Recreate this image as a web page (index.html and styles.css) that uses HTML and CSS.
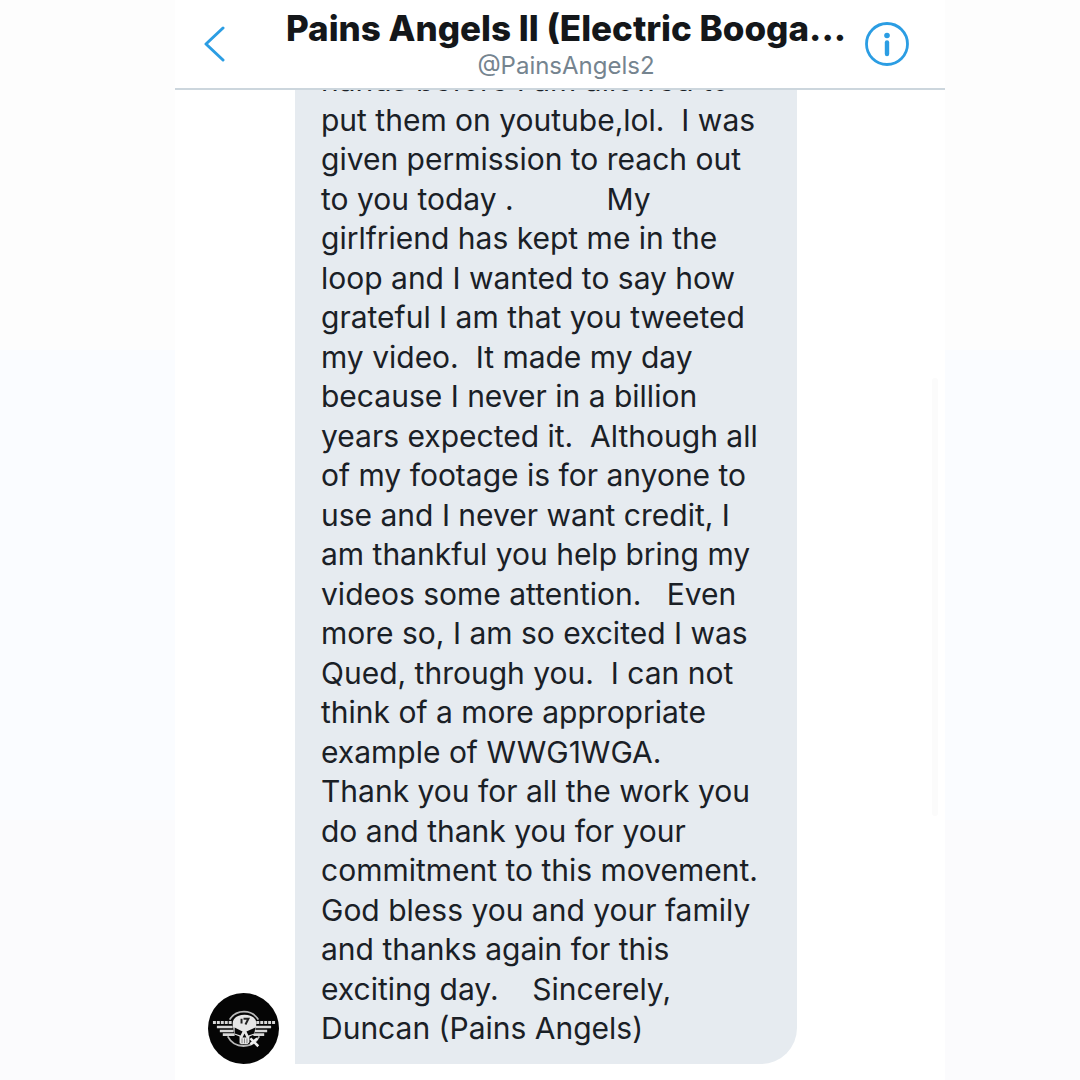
FILE: index.html
```html
<!DOCTYPE html>
<html lang="en">
<head>
<meta charset="utf-8">
<meta name="viewport" content="width=device-width, initial-scale=1">
<title>Pains Angels II - Messages</title>
<link rel="stylesheet" href="styles.css">
</head>
<body>
<div class="phone">
  <header class="bar">
    <button class="icon-button" type="button" aria-label="Back">
      <svg width="22" height="36" viewBox="0 0 22 36" fill="none" stroke="#2b9de3" stroke-width="3" stroke-linecap="round" stroke-linejoin="round"><path d="M19 2L2 18l17 16"/></svg>
    </button>
    <div class="heading">
      <h1 class="name">Pains Angels II (Electric Booga...</h1>
      <p class="handle">@PainsAngels2</p>
    </div>
    <button class="icon-button" type="button" aria-label="Conversation info">
      <svg width="44" height="44" viewBox="0 0 44 44" fill="none" stroke="#2b9de3"><circle cx="22" cy="22" r="20.5" stroke-width="2.8"/><circle cx="22" cy="13.5" r="2.8" fill="#2b9de3" stroke="none"/><path d="M22 20.5v11.5" stroke-width="4.4" stroke-linecap="round"/></svg>
    </button>
  </header>
  <main class="thread">
    <article class="message">
      <svg class="avatar" viewBox="0 0 72 72" role="img" aria-label="Pains Angels">
        <circle cx="36" cy="36" r="36" fill="#050505"/>
        <path d="M22 27a17 17 0 0 1 29 0M20 44a18 18 0 0 0 32 0" fill="none" stroke="#b9b9b9" stroke-width="1.8"/>
        <g stroke="#d8d8d8" fill="none">
          <path d="M5 30h19M49 30h19" stroke-width="3" stroke-dasharray="3 1"/>
          <path d="M9 34.500h16M48 34.500h16M12 38.500h14M47 38.500h13M15 42.200h12M46 42.200h11" stroke-width="2.6"/>
        </g>
        <path d="M37 22c-8 0-12 4-12 9 0 3 1 5 1 7l1 4 5 2v7l2 1h6l2-2v-6l5-2 1-4c0-2 1-4 1-7 0-5-4-9-12-9z" fill="#e6e6e6"/>
        <path d="M27 35l8 4-2 4-6-2zM48 35l-9 4 2 4 6-2zM37 41l2 4h-4z" fill="#080808"/>
        <path d="M34.500 46v5M37 46v5M39.500 46v5" stroke="#555" stroke-width=".7"/>
        <path d="M34 26v5M36 26h5l-3 6" fill="none" stroke="#222" stroke-width="2"/>
        <path d="M43 46l8 8M50 46l-7 6" stroke="#eee" stroke-width="2.600"/>
      </svg>
      <p class="bubble">
        <span class="line">hands before I am allowed to</span>
        <span class="line">put them on youtube,lol.  I was</span>
        <span class="line">given permission to reach out</span>
        <span class="line">to you today .           My</span>
        <span class="line">girlfriend has kept me in the</span>
        <span class="line">loop and I wanted to say how</span>
        <span class="line">grateful I am that you tweeted</span>
        <span class="line">my video.  It made my day</span>
        <span class="line">because I never in a billion</span>
        <span class="line">years expected it.  Although all</span>
        <span class="line">of my footage is for anyone to</span>
        <span class="line">use and I never want credit, I</span>
        <span class="line">am thankful you help bring my</span>
        <span class="line">videos some attention.   Even</span>
        <span class="line">more so, I am so excited I was</span>
        <span class="line">Qued, through you.  I can not</span>
        <span class="line">think of a more appropriate</span>
        <span class="line">example of WWG1WGA.</span>
        <span class="line">Thank you for all the work you</span>
        <span class="line">do and thank you for your</span>
        <span class="line">commitment to this movement.</span>
        <span class="line">God bless you and your family</span>
        <span class="line">and thanks again for this</span>
        <span class="line">exciting day.    Sincerely,</span>
        <span class="line">Duncan (Pains Angels)</span>
      </p>
    </article>
    <div class="scroll-thumb"></div>
  </main>
</div>
</body>
</html>
```
FILE: styles.css
```css
* {
  box-sizing: border-box;
}

body {
  margin: 0;
  padding: 0 135px 0 175px;
  background: linear-gradient(#fdfdfd 0 350px, #fafcff 350px 820px, #fbfbfd 820px);
  color: #1a2026;
  font-family: Inter, "Liberation Sans", sans-serif;
}

.phone {
  display: flex;
  flex-direction: column;
  height: 100vh;
  background: #fff;
}

.bar {
  display: flex;
  align-items: center;
  justify-content: space-between;
  flex: none;
  padding: 6px 28px 6px 10px;
  border-bottom: 2px solid #ccd6dd;
}

.icon-button {
  display: flex;
  align-items: center;
  justify-content: center;
  flex: none;
  width: 60px;
  height: 60px;
  margin: 0;
  padding: 0;
  border: 0;
  background: none;
}

.heading {
  flex: 1;
  min-width: 0;
  padding-left: 30px;
  text-align: center;
}

.name {
  margin: 0;
  color: #14171a;
  font-size: 35px;
  font-weight: 800;
  line-height: 44px;
  white-space: nowrap;
}

.handle {
  margin: 0;
  color: #75848f;
  font-size: 24px;
  line-height: 32px;
}

.thread {
  position: relative;
  display: flex;
  flex: 1;
  flex-direction: column;
  justify-content: flex-end;
  min-height: 0;
  overflow: hidden;
  padding-bottom: 16px;
}

.message {
  display: flex;
  align-items: flex-end;
  gap: 16px;
  padding-left: 33px;
}

.avatar {
  flex: none;
  width: 71px;
  height: 71px;
}

.bubble {
  width: 502px;
  margin: 0;
  padding: 14px 24px 16px 26px;
  border-radius: 36px 36px 36px 0;
  background: #e6ebf0;
  font-size: 30px;
}

/* Alternating leading keeps whole-pixel line boxes at an average of 39.5px. */
.line {
  display: block;
  line-height: 39px;
  white-space: pre;
}

.line:nth-child(even) {
  line-height: 40px;
}

.scroll-thumb {
  position: absolute;
  top: 288px;
  right: 7px;
  width: 6px;
  height: 438px;
  border-radius: 3px;
  background: #fbfbfb;
}
```
